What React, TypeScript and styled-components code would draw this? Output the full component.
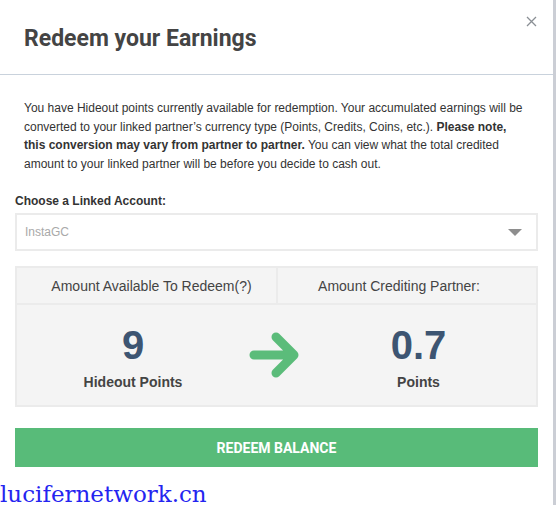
import React from 'react'
import styled, { createGlobalStyle } from 'styled-components'

const GlobalStyle = createGlobalStyle`
    html, body {
        margin: 0;
        padding: 0;
        background: #ffffff;
    }
    body {
        font-family: 'Liberation Sans', Arial, sans-serif;
    }
`

const App: React.FC = () => {
    const available = 9
    const crediting = 0.7

    return (
        <React.Fragment>
            <GlobalStyle />
            <Page>
                <Modal>
                    <Header>
                        <Title>Redeem your Earnings</Title>
                        <CloseButton aria-label="close">
                            <svg width="11" height="11" viewBox="0 0 11 11">
                                <path
                                    d="M1 1 L10 10 M10 1 L1 10"
                                    stroke="#8a8f94"
                                    strokeWidth="1.3"
                                    fill="none"
                                />
                            </svg>
                        </CloseButton>
                    </Header>

                    <Body>
                        <Intro>
                            You have Hideout points currently available for redemption. Your
                            accumulated earnings will be converted to your linked partner’s
                            currency type (Points, Credits, Coins, etc.).{' '}
                            <strong>Please note, this conversion may vary from partner to partner.</strong>{' '}
                            You can view what the total credited amount to your linked partner
                            will be before you decide to cash out.
                        </Intro>

                        <FieldLabel>Choose a Linked Account:</FieldLabel>
                        <Select>
                            <SelectValue>InstaGC</SelectValue>
                            <Caret />
                        </Select>

                        <Summary>
                            <SummaryHead>
                                <HeadCell>Amount Available To Redeem(?)</HeadCell>
                                <HeadCell $divider>Amount Crediting Partner:</HeadCell>
                            </SummaryHead>
                            <SummaryBody>
                                <Amount>
                                    <Figure>{available}</Figure>
                                    <Unit>Hideout Points</Unit>
                                </Amount>
                                <ArrowBox>
                                    <svg width="52" height="46" viewBox="0 0 52 46">
                                        <path
                                            d="M5 23 H45 M27 5 L45 23 L27 41"
                                            stroke="#5bbc7a"
                                            strokeWidth="9"
                                            strokeLinecap="round"
                                            strokeLinejoin="round"
                                            fill="none"
                                        />
                                    </svg>
                                </ArrowBox>
                                <Amount>
                                    <Figure>{crediting}</Figure>
                                    <Unit>Points</Unit>
                                </Amount>
                            </SummaryBody>
                        </Summary>

                        <RedeemButton>REDEEM BALANCE</RedeemButton>
                    </Body>

                    <Watermark>lucifernetwork.cn</Watermark>
                </Modal>
                <Backdrop />
            </Page>
        </React.Fragment>
    )
}

export default App

const Page = styled.div`
    display: flex;
    width: 556px;
    height: 505px;
    overflow: hidden;
`

const Modal = styled.div`
    width: 553px;
    display: flex;
    flex-direction: column;
    background: #ffffff;
`

const Backdrop = styled.div`
    width: 3px;
    background: #cbced5;
`

const Header = styled.div`
    position: relative;
    flex-shrink: 0;
    height: 72px;
    display: flex;
    align-items: center;
    padding: 2px 24px 0;
    border-bottom: 1px solid #c9d2dc;
`

const Title = styled.h2`
    margin: 0;
    font-family: Roboto, 'Liberation Sans', sans-serif;
    font-size: 23px;
    font-weight: 700;
    color: #444444;
`

const CloseButton = styled.button`
    position: absolute;
    top: 16px;
    right: 16px;
    padding: 0;
    border: 0;
    background: none;
    line-height: 0;
    cursor: pointer;
`

const Body = styled.div`
    padding: 0 15px;
    display: flex;
    flex-direction: column;
`

const Intro = styled.p`
    margin: 24px 15px 0 9px;
    font-size: 12px;
    line-height: 18.5px;
    color: #333333;

    strong {
        font-weight: 700;
    }
`

const FieldLabel = styled.div`
    margin-top: 21px;
    font-size: 12px;
    font-weight: 700;
    line-height: 15px;
    color: #333333;
`

const Select = styled.div`
    margin-top: 4px;
    height: 38px;
    box-sizing: border-box;
    border: 2px solid #ebebeb;
    display: flex;
    align-items: center;
    justify-content: space-between;
    padding: 0 14px 0 8px;
`

const SelectValue = styled.span`
    font-size: 12px;
    color: #a9a9a9;
`

const Caret = styled.span`
    width: 0;
    height: 0;
    border-left: 7px solid transparent;
    border-right: 7px solid transparent;
    border-top: 7px solid #8e8e8e;
`

const Summary = styled.div`
    margin-top: 15px;
    border: 2px solid #ebebeb;
    background: #f4f4f4;
`

const SummaryHead = styled.div`
    display: grid;
    grid-template-columns: 259px 1fr;
    height: 35px;
    border-bottom: 2px solid #ebebeb;
`

const HeadCell = styled.div<{ $divider?: boolean }>`
    display: flex;
    align-items: center;
    justify-content: center;
    padding: ${(p) => (p.$divider ? '0 16px 0 0' : '0 0 0 10px')};
    font-size: 14px;
    color: #444444;
    border-left: ${(p) => (p.$divider ? '2px solid #ebebeb' : 'none')};
`

const SummaryBody = styled.div`
    display: grid;
    grid-template-columns: 232px 52px 1fr;
    height: 100px;
    align-items: center;
`

const Amount = styled.div`
    display: flex;
    flex-direction: column;
    align-items: center;
    padding-top: 2px;
`

const Figure = styled.div`
    font-size: 40px;
    font-weight: 700;
    line-height: 44px;
    color: #3d5572;
`

const Unit = styled.div`
    margin-top: 7px;
    font-size: 14px;
    font-weight: 700;
    color: #444444;
`

const ArrowBox = styled.div`
    display: flex;
    justify-content: center;
    align-items: center;
    line-height: 0;
`

const RedeemButton = styled.button`
    margin-top: 21px;
    height: 39px;
    border: 0;
    background: #58bb79;
    color: #ffffff;
    font-family: Roboto, 'Liberation Sans', sans-serif;
    font-size: 14px;
    font-weight: 700;
    cursor: pointer;
`

const Watermark = styled.div`
    margin-top: 14px;
    font-family: 'DejaVu Serif', 'Liberation Serif', serif;
    font-size: 23px;
    line-height: 26px;
    color: #2424f0;
`
